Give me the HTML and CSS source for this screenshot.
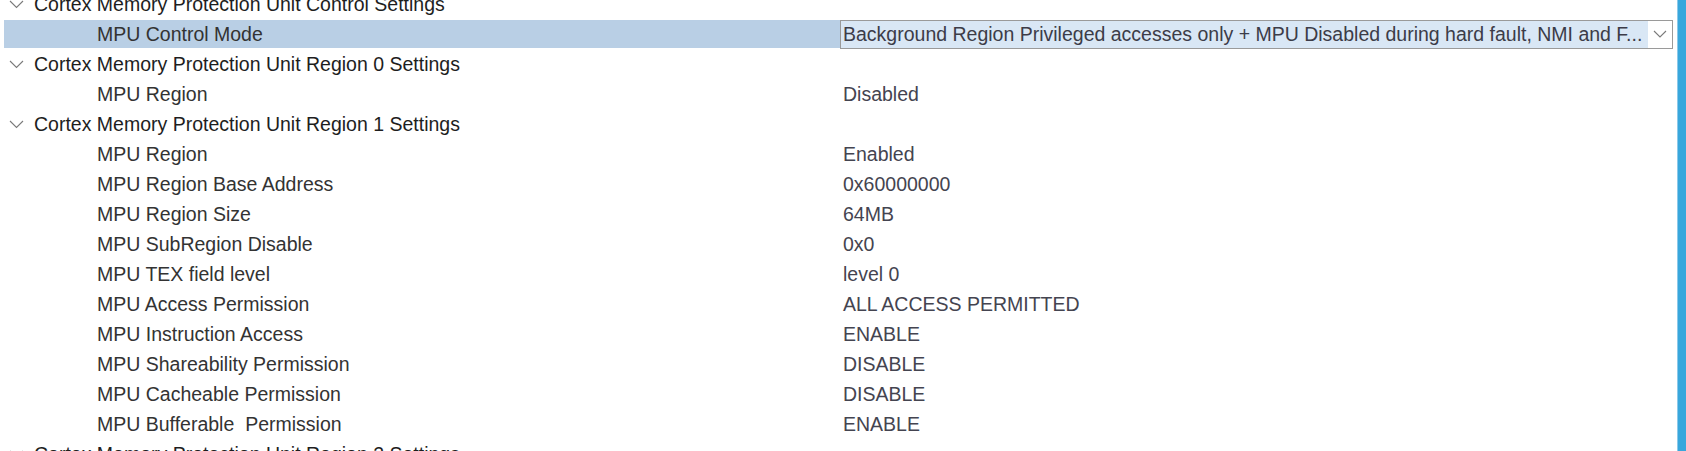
FILE: index.html
```html
<!DOCTYPE html>
<html>
<head>
<meta charset="utf-8">
<link rel="stylesheet" href="styles.css">
</head>
<body>
<div class="page">
  <div class="tree">
    <div class="row group"><div class="label"><span class="chev"><svg width="15" height="9" viewBox="0 0 15 9"><path d="M1 1 L7.5 7.5 L14 1" fill="none" stroke="#7a7a7a" stroke-width="1.1"/></svg></span>Cortex Memory Protection Unit Control Settings</div><div class="value"></div></div>
    <div class="row item selected"><div class="label">MPU Control Mode</div><div class="value"><div class="select"><span class="sel-text">Background Region Privileged accesses only + MPU Disabled during hard fault, NMI and F...</span><span class="sel-btn"><svg width="14" height="8" viewBox="0 0 14 8"><path d="M1 1 L7 7 L13 1" fill="none" stroke="#7a7a7a" stroke-width="1.1"/></svg></span></div></div></div>
    <div class="row group"><div class="label"><span class="chev"><svg width="15" height="9" viewBox="0 0 15 9"><path d="M1 1 L7.5 7.5 L14 1" fill="none" stroke="#7a7a7a" stroke-width="1.1"/></svg></span>Cortex Memory Protection Unit Region 0 Settings</div><div class="value"></div></div>
    <div class="row item"><div class="label">MPU Region</div><div class="value">Disabled</div></div>
    <div class="row group"><div class="label"><span class="chev"><svg width="15" height="9" viewBox="0 0 15 9"><path d="M1 1 L7.5 7.5 L14 1" fill="none" stroke="#7a7a7a" stroke-width="1.1"/></svg></span>Cortex Memory Protection Unit Region 1 Settings</div><div class="value"></div></div>
    <div class="row item"><div class="label">MPU Region</div><div class="value">Enabled</div></div>
    <div class="row item"><div class="label">MPU Region Base Address</div><div class="value">0x60000000</div></div>
    <div class="row item"><div class="label">MPU Region Size</div><div class="value">64MB</div></div>
    <div class="row item"><div class="label">MPU SubRegion Disable</div><div class="value">0x0</div></div>
    <div class="row item"><div class="label">MPU TEX field level</div><div class="value">level 0</div></div>
    <div class="row item"><div class="label">MPU Access Permission</div><div class="value">ALL ACCESS PERMITTED</div></div>
    <div class="row item"><div class="label">MPU Instruction Access</div><div class="value">ENABLE</div></div>
    <div class="row item"><div class="label">MPU Shareability Permission</div><div class="value">DISABLE</div></div>
    <div class="row item"><div class="label">MPU Cacheable Permission</div><div class="value">DISABLE</div></div>
    <div class="row item"><div class="label">MPU Bufferable&nbsp; Permission</div><div class="value">ENABLE</div></div>
    <div class="row group"><div class="label"><span class="chev"><svg width="15" height="9" viewBox="0 0 15 9"><path d="M1 1 L7.5 7.5 L14 1" fill="none" stroke="#7a7a7a" stroke-width="1.1"/></svg></span>Cortex Memory Protection Unit Region 2 Settings</div><div class="value"></div></div>
  </div>
  <div class="scrollbar"></div>
</div>
</body>
</html>
```

FILE: styles.css
```css
html, body {
  margin: 0;
  padding: 0;
  background: #ffffff;
  overflow: hidden;
}
body {
  font-family: "Liberation Sans", Arial, sans-serif;
  font-size: 19.5px;
  color: #3a3a3a;
}
.page {
  display: flex;
  height: 451px;
  overflow: hidden;
}
.tree {
  flex: 1;
  margin-top: -11px;
  padding-left: 4px;
}
.row {
  display: flex;
  align-items: center;
  height: 30px;
  white-space: nowrap;
}
.label {
  width: 836px;
  height: 28px;
  display: flex;
  align-items: center;
  box-sizing: border-box;
}
.group .label {
  padding-left: 5px;
  color: #1e1e1e;
}
.chev {
  display: inline-flex;
  width: 25px;
  align-items: center;
}
.item .label {
  padding-left: 93px;
  color: #333333;
}
.selected .label {
  background: #b9cfe5;
}
.value {
  padding-left: 3px;
  color: #444450;
  flex: 1;
  height: 28px;
  display: flex;
  align-items: center;
}
.selected .value {
  padding-left: 0;
  padding-right: 4px;
}
.select {
  width: 833px;
  height: 29px;
  box-sizing: border-box;
  border: 1px solid #9a9a9a;
  display: flex;
  align-items: stretch;
  background: #ffffff;
}
.sel-text {
  flex: 1;
  background: #d9e7f5;
  padding-left: 2px;
  display: flex;
  align-items: center;
  overflow: hidden;
  color: #3c3c48;
}
.sel-btn {
  width: 24px;
  display: flex;
  align-items: center;
  justify-content: center;
  background: #ffffff;
}
.scrollbar {
  width: 8px;
  background: #38a7dc;
  border-left: 1px solid #8cc9ea;
}
```
